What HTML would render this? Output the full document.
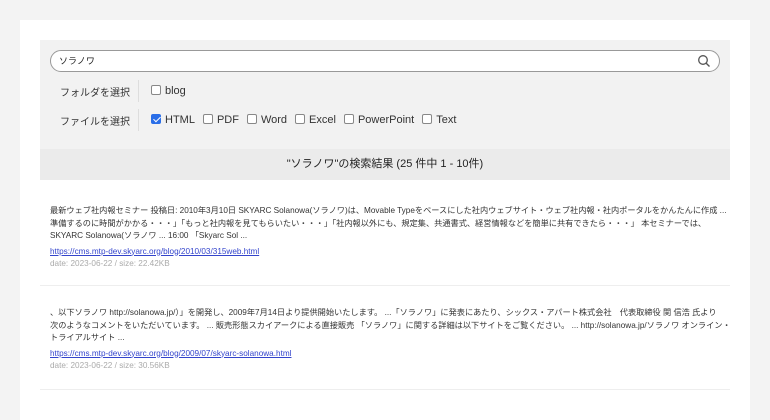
<!DOCTYPE html>
<html><head><meta charset="utf-8"><style>
*{margin:0;padding:0;box-sizing:border-box}
body{width:770px;height:407px;background:#f3f3f3;font-family:"Liberation Sans","Noto Sans CJK JP",sans-serif;overflow:hidden;position:relative}
.card{position:absolute;left:20px;top:20px;width:730px;height:400px;background:#fff}
.panel{position:absolute;left:20px;top:20px;width:690px;height:140px;background:#f2f2f2}
.search{position:absolute;left:10px;top:10px;width:670px;height:22px;border:1px solid #999;border-radius:11px;background:#fff;font-size:9px;padding-left:8px;line-height:20px;color:#222}
.search svg{position:absolute;right:8px;top:3px}
.row{position:absolute;left:20px;font-size:11px;color:#333;display:flex;align-items:center;height:20px}
.lbl{width:78px;font-size:10px}
.sep{width:1px;height:22px;background:#ddd;margin-right:12px}
.cb{display:inline-block;width:10px;height:10px;border:1px solid #888;border-radius:2px;background:#fff;margin-right:4px;vertical-align:-1px}
.cb.on{background:#2a6ee8;border-color:#2a6ee8;position:relative}
.cb.on:after{content:"";position:absolute;left:2.5px;top:0px;width:3px;height:6px;border:solid #fff;border-width:0 1.3px 1.3px 0;transform:rotate(45deg)}
.it{margin-right:8px}
.bar{position:absolute;left:20px;top:129px;width:690px;height:31px;background:#ebebeb;text-align:center;font-size:11px;line-height:31px;color:#222}
.res{position:absolute;left:50px;width:685px;font-size:8.2px;color:#333;line-height:12.5px}
.res a{color:#3344cc;text-decoration:underline;display:block;margin-top:3px;line-height:11px}
.res .d{color:#aaa;line-height:13px}
.hr{position:absolute;left:40px;width:690px;height:1px;background:#eee}
</style></head><body>
<div class="card">
<div class="panel">
<div class="search">ソラノワ<svg width="14" height="14" viewBox="0 0 14 14"><circle cx="6" cy="6" r="4.3" fill="none" stroke="#555" stroke-width="1.3"/><path d="M9.2 9.2L12.5 12.5" stroke="#555" stroke-width="1.4"/></svg></div>
<div class="row" style="top:41px"><span class="lbl">フォルダを選択</span><span class="sep"></span><span class="it"><span class="cb"></span>blog</span></div>
<div class="row" style="top:70px"><span class="lbl">ファイルを選択</span><span class="sep"></span><span class="it"><span class="cb on"></span>HTML</span><span class="it"><span class="cb"></span>PDF</span><span class="it"><span class="cb"></span>Word</span><span class="it"><span class="cb"></span>Excel</span><span class="it"><span class="cb"></span>PowerPoint</span><span class="it"><span class="cb"></span>Text</span></div>
</div>
<div class="bar">"ソラノワ"の検索結果 (25 件中 1 - 10件)</div>
</div>
<div class="res" style="top:205px">最新ウェブ社内報セミナー 投稿日: 2010年3月10日 SKYARC Solanowa(ソラノワ)は、Movable Typeをベースにした社内ウェブサイト・ウェブ社内報・社内ポータルをかんたんに作成 ...<br>準備するのに時間がかかる・・・」「もっと社内報を見てもらいたい・・・」「社内報以外にも、規定集、共通書式、経営情報などを簡単に共有できたら・・・」 本セミナーでは、<br>SKYARC Solanowa(ソラノワ ... 16:00 「Skyarc Sol ...<a>https://cms.mtp-dev.skyarc.org/blog/2010/03/315web.html</a><div class="d">date: 2023-06-22 / size: 22.42KB</div></div>
<div class="hr" style="top:285px"></div>
<div class="res" style="top:307px">、以下ソラノワ http://solanowa.jp/）」を開発し、2009年7月14日より提供開始いたします。 ...「ソラノワ」に発表にあたり、シックス・アパート株式会社　代表取締役 関 信浩 氏より<br>次のようなコメントをいただいています。 ... 販売形態スカイアークによる直接販売 「ソラノワ」に関する詳細は以下サイトをご覧ください。 ... http://solanowa.jp/ソラノワ オンライン・<br>トライアルサイト ...<a>https://cms.mtp-dev.skyarc.org/blog/2009/07/skyarc-solanowa.html</a><div class="d">date: 2023-06-22 / size: 30.56KB</div></div>
<div class="hr" style="top:389px"></div>
</body></html>
